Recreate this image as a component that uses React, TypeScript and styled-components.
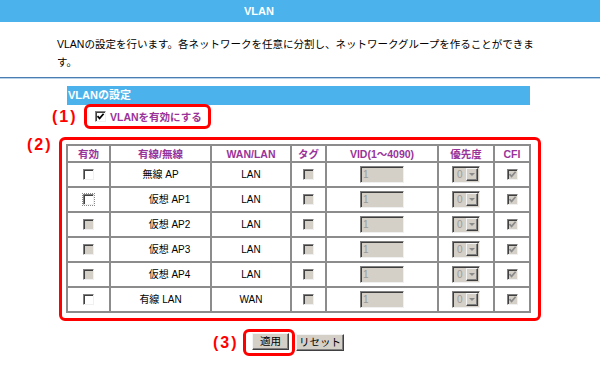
import styled, { createGlobalStyle } from "styled-components"

const GlobalStyle = createGlobalStyle`
  body {
    margin: 0;
    background: #fff;
    font-family: "Liberation Sans", "Noto Sans CJK JP", sans-serif;
    color: #000;
  }
  * { box-sizing: border-box; }
`

const Page = styled.div`
  width: 600px;
  height: 365px;
  overflow: hidden;
  background: #fff;
`

const TitleBar = styled.div`
  height: 22px;
  background: #4cb2ec;
  color: #fff;
  font-weight: bold;
  font-size: 11px;
  display: flex;
  align-items: center;
  justify-content: center;
  padding-right: 82px;
`

const Description = styled.p`
  margin: 0;
  padding: 13px 0 0 57px;
  width: 536px;
  font-size: 10.5px;
  line-height: 18px;
`

const Divider = styled.div`
  margin-top: 6px;
  height: 2px;
  border-top: 1px solid #4a7db2;
  border-bottom: 1px solid #b9d2e8;
`

const SectionHeader = styled.div`
  margin: 7px 0 0 67px;
  width: 463px;
  height: 19px;
  line-height: 19px;
  padding-left: 1px;
  background: #4cb2ec;
  color: #fff;
  font-weight: bold;
  font-size: 11px;
`

const AnnotatedRow = styled.div<{ $left: number; $top: number; $align?: string }>`
  display: flex;
  align-items: ${(p) => p.$align ?? "center"};
  padding-left: ${(p) => p.$left}px;
  margin-top: ${(p) => p.$top}px;
`

const Marker = styled.span<{ $gap: number }>`
  width: 25px;
  margin-right: ${(p) => p.$gap}px;
  color: #ff0000;
  font-weight: bold;
  font-size: 16px;
  line-height: 16px;
  letter-spacing: 2px;
  white-space: nowrap;
`

const RedBox = styled.div<{ $pad: string; $height?: number }>`
  border: 3px solid #ff0000;
  border-radius: 6px;
  padding: ${(p) => p.$pad};
  height: ${(p) => (p.$height ? `${p.$height}px` : "auto")};
  display: flex;
  align-items: center;
`

const EnableLabel = styled.span`
  margin-left: 4px;
  color: #993399;
  font-weight: bold;
  font-size: 10.5px;
  white-space: nowrap;
`

const Box = styled.span<{ $disabled?: boolean; $focus?: boolean }>`
  display: inline-flex;
  align-items: center;
  justify-content: center;
  flex: none;
  width: 11px;
  height: 11px;
  border: 1px solid;
  border-color: #808080 #f0f0f0 #f0f0f0 #808080;
  box-shadow: inset 1px 1px 0 #404040;
  background: ${(p) => (p.$disabled ? "#d4d0c8" : "#fff")};
  outline: ${(p) => (p.$focus ? "1px dotted #8a8a8a" : "none")};
  outline-offset: 0;
  vertical-align: middle;
`

function Checkbox({ checked, disabled, focus }: { checked?: boolean; disabled?: boolean; focus?: boolean }) {
  return (
    <Box $disabled={disabled} $focus={focus}>
      {checked && (
        <svg width="9" height="9" viewBox="0 0 9 9">
          <polyline
            points="1.5,4.2 3.6,6.4 7.6,1.8"
            fill="none"
            stroke={disabled ? "#8a8a8a" : "#000"}
            strokeWidth="1.7"
          />
        </svg>
      )}
    </Box>
  )
}

const Table = styled.table`
  border-collapse: separate;
  border-spacing: 0;
  border: 1px solid #8c8c8c;
  width: 463px;
  table-layout: fixed;
`

const Th = styled.th`
  height: 17px;
  padding: 0;
  border: 1px solid #8c8c8c;
  color: #993399;
  font-size: 10.5px;
  font-weight: bold;
  text-align: center;
  vertical-align: middle;
`

const Td = styled.td<{ $indent?: number }>`
  height: 25px;
  padding: 0 0 0 ${(p) => p.$indent ?? 0}px;
  border: 1px solid #8c8c8c;
  font-size: 10px;
  text-align: center;
  vertical-align: middle;
  line-height: 12px;
`

const VidInput = styled.input`
  width: 44px;
  height: 17px;
  padding: 0 2px;
  border: 1px solid;
  border-color: #808080 #f0f0f0 #f0f0f0 #808080;
  box-shadow: inset 1px 1px 0 #404040;
  background: #d4d0c8;
  color: #9a9a9a;
  font-family: "Liberation Sans", sans-serif;
  font-size: 10px;
  vertical-align: middle;
  outline: none;
`

const SelectBox = styled.span`
  display: inline-flex;
  align-items: center;
  width: 28px;
  height: 17px;
  padding: 1px;
  border: 1px solid;
  border-color: #808080 #f0f0f0 #f0f0f0 #808080;
  box-shadow: inset 1px 1px 0 #404040;
  background: #d4d0c8;
  vertical-align: middle;
`

const SelectValue = styled.span`
  flex: 1;
  padding-left: 3px;
  text-align: left;
  color: #9a9a9a;
  font-size: 10px;
`

const ArrowButton = styled.span`
  width: 12px;
  height: 13px;
  display: flex;
  align-items: center;
  justify-content: center;
  background: #d4d0c8;
  border: 1px solid;
  border-color: #f4f4f4 #404040 #404040 #f4f4f4;
  box-shadow: inset -1px -1px 0 #808080;

  &::after {
    content: "";
    border-left: 3px solid transparent;
    border-right: 3px solid transparent;
    border-top: 3px solid #8a8a8a;
  }
`

const Button = styled.button<{ $width: number }>`
  width: ${(p) => p.$width}px;
  height: 17px;
  padding: 0;
  background: #d4d0c8;
  border: 1px solid;
  border-color: #f4f4f4 #404040 #404040 #f4f4f4;
  box-shadow: inset -1px -1px 0 #808080;
  font-family: "Liberation Sans", "Noto Sans CJK JP", sans-serif;
  font-size: 10.5px;
  color: #000;
  line-height: 13px;
`

const ResetButton = styled(Button)`
  margin-left: 1px;
`

type Row = {
  name: string
  indent?: number
  wan: string
  disabled?: boolean
  focus?: boolean
}

const rows: Row[] = [
  { name: "無線 AP", wan: "LAN" },
  { name: "仮想 AP1", indent: 18, wan: "LAN", focus: true },
  { name: "仮想 AP2", indent: 18, wan: "LAN", disabled: true },
  { name: "仮想 AP3", indent: 18, wan: "LAN", disabled: true },
  { name: "仮想 AP4", indent: 18, wan: "LAN", disabled: true },
  { name: "有線 LAN", wan: "WAN" },
]

const widths = [43, 101, 80, 35, 112, 56, 36]
const headers = ["有効", "有線/無線", "WAN/LAN", "タグ", "VID(1〜4090)", "優先度", "CFI"]

export default function App() {
  return (
    <Page>
      <GlobalStyle />
      <TitleBar>VLAN</TitleBar>
      <Description>
        VLANの設定を行います。各ネットワークを任意に分割し、ネットワークグループを作ることができます。
      </Description>
      <Divider />
      <SectionHeader>VLANの設定</SectionHeader>

      <AnnotatedRow $left={52} $top={-1}>
        <Marker $gap={7}>(1)</Marker>
        <RedBox $pad="0 6px 0 8px" $height={25}>
          <Checkbox checked />
          <EnableLabel>VLANを有効にする</EnableLabel>
        </RedBox>
      </AnnotatedRow>

      <AnnotatedRow $left={27} $top={8} $align="flex-start">
        <Marker $gap={7}>(2)</Marker>
        <RedBox $pad="4px 7px 5px 4px">
          <Table>
            <colgroup>
              {widths.map((w, i) => (
                <col key={i} style={{ width: w }} />
              ))}
            </colgroup>
            <thead>
              <tr>
                {headers.map((h) => (
                  <Th key={h}>{h}</Th>
                ))}
              </tr>
            </thead>
            <tbody>
              {rows.map((r) => (
                <tr key={r.name}>
                  <Td>
                    <Checkbox disabled={r.disabled} focus={r.focus} />
                  </Td>
                  <Td $indent={r.indent}>{r.name}</Td>
                  <Td>{r.wan}</Td>
                  <Td>
                    <Checkbox disabled />
                  </Td>
                  <Td>
                    <VidInput value="1" readOnly />
                  </Td>
                  <Td>
                    <SelectBox>
                      <SelectValue>0</SelectValue>
                      <ArrowButton />
                    </SelectBox>
                  </Td>
                  <Td>
                    <Checkbox checked disabled />
                  </Td>
                </tr>
              ))}
            </tbody>
          </Table>
        </RedBox>
      </AnnotatedRow>

      <AnnotatedRow $left={213} $top={8}>
        <Marker $gap={5}>(3)</Marker>
        <RedBox $pad="1px 3px 3px 6px">
          <Button $width={37}>適用</Button>
        </RedBox>
        <ResetButton $width={48}>リセット</ResetButton>
      </AnnotatedRow>
    </Page>
  )
}
